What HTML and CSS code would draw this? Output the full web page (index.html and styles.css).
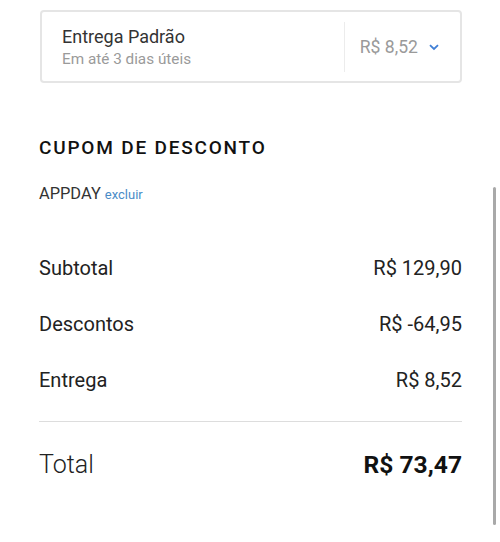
FILE: index.html
```html
<!DOCTYPE html>
<html lang="pt-BR">
<head>
    <meta charset="UTF-8">
    <title>Resumo do pedido</title>
    <link rel="stylesheet" href="styles.css">
</head>
<body>

<div class="page">
    <div class="shipping-card">
        <div class="shipping-info">
            <div class="shipping-name">Entrega Padrão</div>
            <div class="shipping-time">Em até 3 dias úteis</div>
        </div>
        <div class="shipping-price">
            <span>R$ 8,52</span>
            <svg class="chevron" width="10" height="7" viewBox="0 0 10 7">
                <path d="M1 1.2 L5 5 L9 1.2" fill="none" stroke="#3f7fd6" stroke-width="1.8"/>
            </svg>
        </div>
    </div>

    <h2 class="section-title">CUPOM DE DESCONTO</h2>
    <div class="coupon">APPDAY <a href="#" class="coupon-remove">excluir</a></div>

    <div class="summary">
        <div class="summary-row"><span>Subtotal</span><span>R$ 129,90</span></div>
        <div class="summary-row"><span>Descontos</span><span>R$ -64,95</span></div>
        <div class="summary-row"><span>Entrega</span><span>R$ 8,52</span></div>
    </div>

    <div class="total-row">
        <span class="total-label">Total</span>
        <span class="total-value">R$ 73,47</span>
    </div>
</div>

<div class="scrollbar"></div>

</body>
</html>
```

FILE: styles.css
```css
body {
    margin: 0;
    background: #ffffff;
    font-family: Roboto, "Liberation Sans", sans-serif;
    color: #222;
}
.page {
    padding: 10px 38px 0 39px;
}
.shipping-card {
    display: flex;
    border: 2px solid #e5e5e5;
    border-radius: 4px;
    margin-left: 1px;
    height: 69px;
}
.shipping-info {
    flex: 1;
    padding: 13px 0 0 20px;
}
.shipping-name {
    font-size: 18px;
    line-height: 23px;
    color: #333;
}
.shipping-time {
    margin-top: 1px;
    font-size: 15.3px;
    line-height: 20px;
    color: #9a9a9a;
}
.shipping-price {
    display: flex;
    align-items: center;
    gap: 11px;
    margin: 10px 0 9px;
    padding: 0 21px 0 15px;
    border-left: 1px solid #ececec;
    font-size: 17.6px;
    color: #9a9a9a;
}
.section-title {
    margin: 53px 0 0;
    font-size: 19px;
    line-height: 24px;
    font-weight: 500;
    letter-spacing: 1.8px;
    color: #111;
}
.coupon {
    margin-top: 24px;
    font-size: 16.4px;
    line-height: 20px;
    color: #333;
}
.coupon-remove {
    font-size: 13px;
    color: #4a8cc7;
    text-decoration: none;
}
.summary {
    margin-top: 35px;
    border-bottom: 1px solid #dddddd;
    padding-bottom: 13px;
}
.summary-row {
    display: flex;
    justify-content: space-between;
    padding: 16px 0;
    font-size: 20px;
    line-height: 24px;
}
.total-row {
    display: flex;
    justify-content: space-between;
    align-items: baseline;
    padding-top: 28px;
}
.total-label {
    font-size: 25px;
    line-height: 30px;
    font-weight: 300;
}
.total-value {
    font-size: 24.6px;
    font-weight: 700;
    color: #111;
}
.scrollbar {
    position: absolute;
    left: 493px;
    top: 187px;
    width: 3px;
    height: 338px;
    background: #a9a9a9;
    border-radius: 2px;
}
```
